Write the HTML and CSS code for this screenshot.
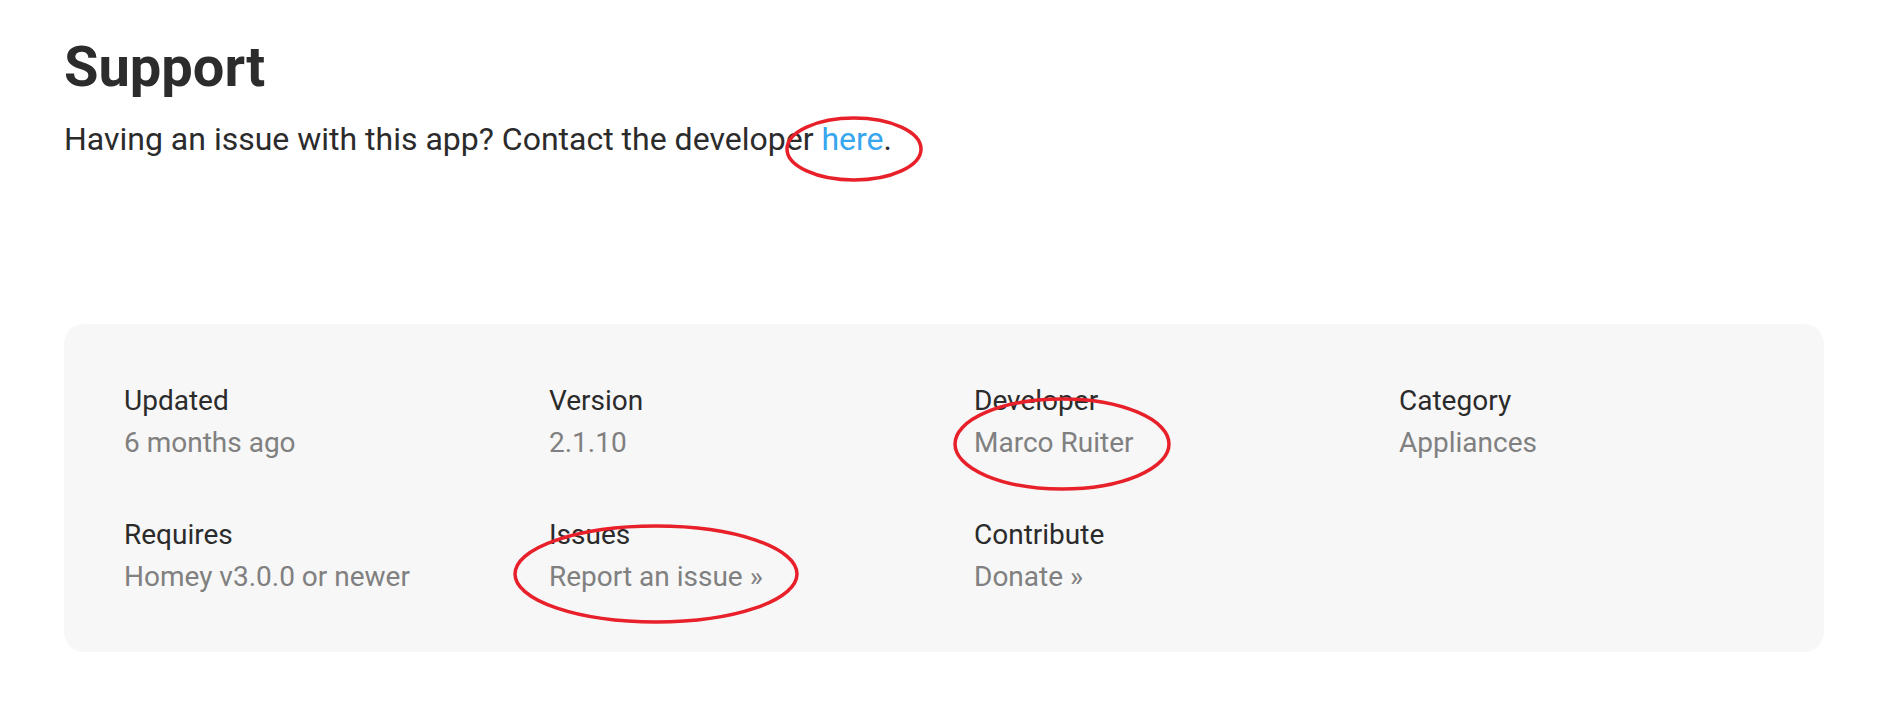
FILE: index.html
```html
<!DOCTYPE html>
<html lang="en">
<head>
<meta charset="utf-8">
<title>Support</title>
<link rel="stylesheet" href="styles.css">
</head>
<body>
<main class="page">
  <section class="support">
    <h1 class="support-title">Support</h1>
    <p class="support-text">Having an issue with this app? Contact the developer <a class="link" href="#">here</a>.</p>
  </section>
  <section class="meta-card">
    <div class="meta-grid">
      <div class="meta-item">
        <div class="meta-label">Updated</div>
        <div class="meta-value">6 months ago</div>
      </div>
      <div class="meta-item">
        <div class="meta-label">Version</div>
        <div class="meta-value">2.1.10</div>
      </div>
      <div class="meta-item">
        <div class="meta-label">Developer</div>
        <a class="meta-value" href="#">Marco Ruiter</a>
      </div>
      <div class="meta-item">
        <div class="meta-label">Category</div>
        <a class="meta-value" href="#">Appliances</a>
      </div>
      <div class="meta-item">
        <div class="meta-label">Requires</div>
        <div class="meta-value">Homey v3.0.0 or newer</div>
      </div>
      <div class="meta-item">
        <div class="meta-label">Issues</div>
        <a class="meta-value" href="#">Report an issue »</a>
      </div>
      <div class="meta-item">
        <div class="meta-label">Contribute</div>
        <a class="meta-value" href="#">Donate »</a>
      </div>
    </div>
  </section>
</main>
<svg class="annotations" width="1882" height="712" viewBox="0 0 1882 712" aria-hidden="true">
  <ellipse cx="854" cy="149" rx="67" ry="31" />
  <ellipse cx="1062" cy="444" rx="107" ry="45" />
  <ellipse cx="656" cy="574" rx="141" ry="48" />
</svg>
</body>
</html>
```

FILE: styles.css
```css
html, body {
  margin: 0;
  padding: 0;
  background: #ffffff;
}

body {
  font-family: Roboto, "Liberation Sans", Arial, sans-serif;
  color: #2b2b2b;
  position: relative;
  width: 1882px;
  height: 712px;
  overflow: hidden;
}

.page {
  padding: 35px 58px 0 64px;
}

.support-title {
  margin: 0 0 15px;
  font-size: 56px;
  line-height: 65px;
  font-weight: 700;
  color: #2c2c2c;
}

.support-text {
  margin: 0 0 161px;
  font-size: 32px;
  line-height: 48px;
  color: #2b2b2b;
}

.link {
  color: #36a6ee;
  text-decoration: none;
}

.meta-card {
  background: #f7f7f7;
  border-radius: 20px;
  padding: 56px 0 54px 60px;
}

.meta-grid {
  display: grid;
  grid-template-columns: repeat(4, 1fr);
  row-gap: 50px;
}

.meta-item {
  display: flex;
  flex-direction: column;
}

.meta-label {
  font-size: 28px;
  line-height: 42px;
  color: #2b2b2b;
}

.meta-value {
  font-size: 28px;
  line-height: 42px;
  color: #808080;
  text-decoration: none;
}

.annotations {
  position: absolute;
  left: 0;
  top: 0;
  pointer-events: none;
}

.annotations ellipse {
  fill: none;
  stroke: #e8202a;
  stroke-width: 3.5;
}
```
